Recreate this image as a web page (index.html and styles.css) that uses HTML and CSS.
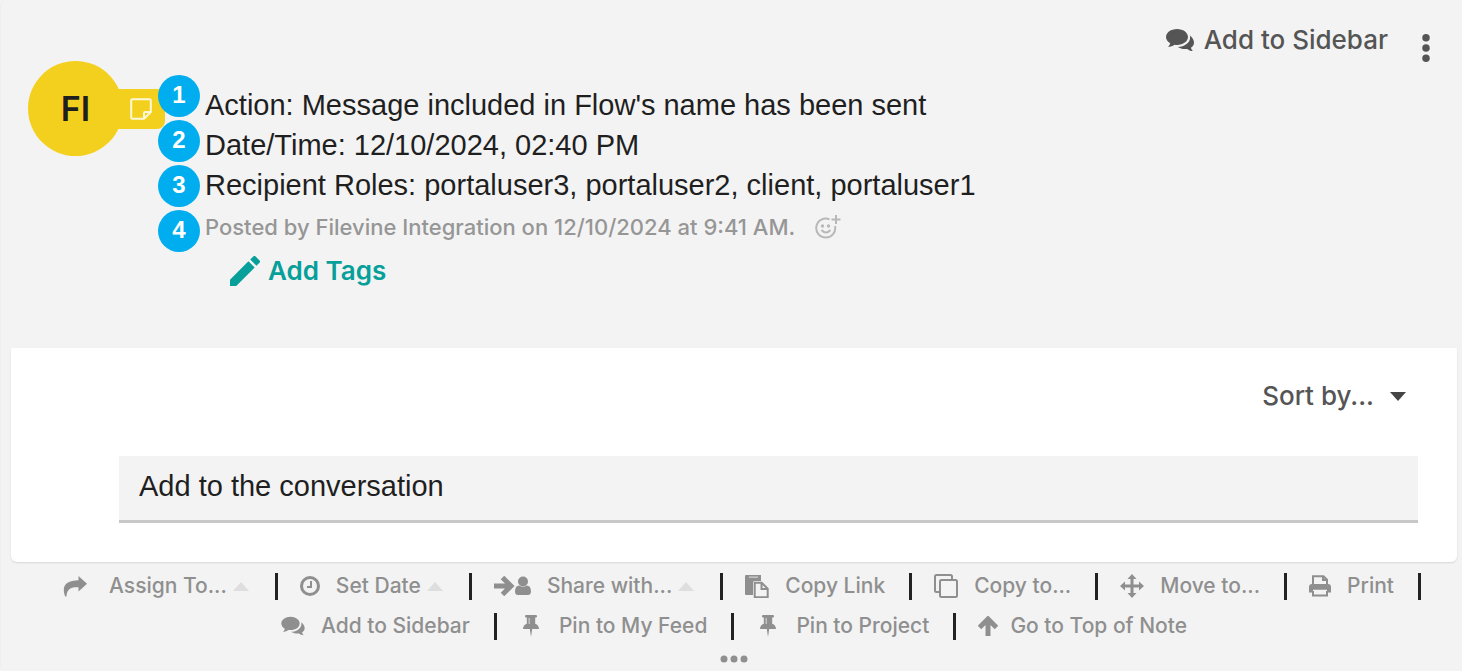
FILE: index.html
```html
<!DOCTYPE html>
<html lang="en">
<head>
    <meta charset="UTF-8">
    <title>Note</title>

    <link rel="stylesheet" href="styles.css">

</head>
<body>

<!-- shapes that are used more than once -->
<svg class="defs" aria-hidden="true">
    <symbol id="comments" viewBox="0 0 28 24">
        <path d="M11 1C5 1 0 4.600 0 9c0 2.500 1.600 4.800 4.200 6.300C3.900 16.800 3 18 2 19c2.600-.2 4.700-1 6.400-2.300.8.100 1.700.2 2.600.2 6.100 0 11-3.500 11-7.900S17.100 1 11 1z"/>
        <path d="M23.800 7.500c.2.700.3 1.300.3 2 0 5.200-5.500 9.300-12.300 9.500 1.900 1.300 4.400 2.100 7.200 2.100.8 0 1.500-.1 2.200-.2 1.400 1.200 3.300 2 5.600 2.100-.9-.9-1.600-1.900-1.900-3.200 2-1.200 3.100-3 3.100-5 0-2.900-1.600-5.700-4.200-7.300z"/>
    </symbol>
    <symbol id="pin" viewBox="0 0 16 22">
        <path d="M3 0h10q1 0 1 1.200T13 2.400h-.8v6.400C14.600 9.600 16 11.500 16 14H9.200L8 22l-1.200-8H0c0-2.500 1.400-4.400 3.800-5.200V2.400H3q-1 0-1-1.200T3 0z"/>
        <path class="shine" d="M5.600 3h1.200v6H5.600z"/>
    </symbol>
</svg>

<div class="note">

    <header class="top">
        <button class="sidebar-button"><svg class="icon-comments" aria-hidden="true"><use href="#comments"/></svg>Add to Sidebar</button>
        <button class="more" aria-label="More options">
            <svg viewBox="0 0 8 30" aria-hidden="true"><circle cx="4" cy="4" r="4"/><circle cx="4" cy="15" r="4"/><circle cx="4" cy="26" r="4"/></svg>
        </button>
    </header>

    <section class="message">
        <div class="author">
            <div class="avatar">FI</div>
            <div class="type">
                <svg viewBox="0 0 22 22" aria-hidden="true"><path d="M2.500 1.200h17q1.300 0 1.300 1.300v11.500l-6.800 6.800H2.500q-1.300 0-1.300-1.300v-17q0-1.300 1.300-1.300zM14 20.500V15.300q0-1.300 1.300-1.300h5.200"/></svg>
            </div>
        </div>

        <div class="text">
            <div class="numbers">
                <span>1</span>
                <span>2</span>
                <span>3</span>
                <span>4</span>
            </div>
            <p class="line">Action: Message included in Flow's name has been sent</p>
            <p class="line">Date/Time: 12/10/2024, 02:40 PM</p>
            <p class="line">Recipient Roles: portaluser3, portaluser2, client, portaluser1</p>
            <div class="posted">
                Posted by Filevine Integration on 12/10/2024 at 9:41 AM.
                <button class="react" aria-label="Add reaction">
                    <svg viewBox="0 0 26 26" aria-hidden="true"><path d="M14.500 5.400A9.500 9.500 0 1 0 20 12M6.500 16q4.500 5 9 0M21 1v9M16.500 5.500h9"/><circle cx="7.500" cy="12" r="1.700"/><circle cx="13.500" cy="12" r="1.700"/></svg>
                </button>
            </div>
            <button class="tags">
                <svg viewBox="3 3 18 18" aria-hidden="true"><path d="M3 17.250V21h3.750L17.810 9.940l-3.750-3.750L3 17.250zM20.710 7.040a1 1 0 0 0 0-1.410l-2.340-2.340a1 1 0 0 0-1.410 0l-1.830 1.830 3.750 3.750 1.830-1.830z"/></svg>
                Add Tags
            </button>
        </div>
    </section>

    <section class="conversation">
        <button class="sort">Sort by...<span class="arrow-down"></span></button>
        <input class="reply" type="text" placeholder="Add to the conversation" aria-label="Add to the conversation">
    </section>

    <footer class="actions">
        <ul>
            <li><button class="wide"><svg width="24" height="21" viewBox="0 0 24 21" aria-hidden="true"><path d="M15.500 0 24 7.700l-8.500 7.700v-4.200C8 10.800 4 12.500 3.400 20.500H2.200C-2 9.500 3.500 4.400 15.500 4.300z"/></svg>Assign To...<span class="arrow-up"></span></button></li>
            <li><button><svg class="medium" width="20" height="20" viewBox="0 0 20 20" aria-hidden="true"><circle cx="10" cy="10" r="8.500"/><path class="thin" d="M11 5v6H7"/></svg>Set Date<span class="arrow-up"></span></button></li>
            <li><button><svg width="37" height="20" viewBox="0 0 37 20" aria-hidden="true"><path class="thick" d="M0 10H16M8.500 1.500l8.500 8.500-8.500 8.500"/><circle cx="29" cy="5.500" r="5"/><path d="M21 15.500c0-4 1.500-6 4.300-6q3.700 2.700 7.400 0c2.800 0 4.300 2 4.300 6 0 2.500-1.300 3.500-3 3.500H24c-1.700 0-3-1-3-3.500z"/></svg>Share with...<span class="arrow-up"></span></button></li>
            <li><button><svg width="24" height="23" viewBox="0 0 24 23" aria-hidden="true"><path d="M1 0h15v6h-6.500q-1.500 0-1.500 1.500V20H1q-1 0-1-1V1q0-1 1-1z"/><path class="shine" d="M4 1.500h9v1.300H4z"/><path class="thin" d="M9.700 7.700h7l6 6v8.500h-13zM16.500 8v6H22.500"/></svg>Copy Link</button></li>
            <li><button><svg width="24" height="24" viewBox="0 0 24 24" aria-hidden="true"><path class="thin" d="M5 18H2.500Q1 18 1 16.500v-14Q1 1 2.500 1h14Q18 1 18 2.500V5M7.500 6h14Q23 6 23 7.500v14Q23 23 21.500 23h-14Q6 23 6 21.500v-14Q6 6 7.500 6z"/></svg>Copy to...</button></li>
            <li><button><svg width="24" height="24" viewBox="0 0 24 24" aria-hidden="true"><path d="M12 0l4.500 5h-3v5.500H19V7.500l5 4.500-5 4.500v-3h-5.500V19h3L12 24l-4.500-5h3v-5.500H5v3L0 12l5-4.500v3h5.500V5h-3z"/></svg>Move to...</button></li>
            <li><button><svg width="22" height="22" viewBox="0 0 22 22" aria-hidden="true"><path class="thin" d="M4 9V1.200h10.500L18 4.700V9M4 16v4.500h14V16M14 1.500v3.500h4"/><path d="M3 9h16q3 0 3 3v5.500h-4v-2.700H4v2.700H0V12q0-3 3-3z"/></svg>Print</button></li>
        </ul>
        <ul>
            <li><button><svg width="24" height="20" viewBox="0 0 24 20" aria-hidden="true"><use href="#comments" width="24" height="20"/></svg>Add to Sidebar</button></li>
            <li><button class="pin"><svg width="16" height="22" aria-hidden="true"><use href="#pin"/></svg>Pin to My Feed</button></li>
            <li><button class="pin"><svg width="16" height="22" aria-hidden="true"><use href="#pin"/></svg>Pin to Project</button></li>
            <li><button class="close"><svg width="20" height="20" viewBox="0 0 20 20" aria-hidden="true"><path class="thick" d="M10 20V3M1.500 11.500l8.500-8.500 8.500 8.500"/></svg>Go to Top of Note</button></li>
        </ul>
        <button class="dots" aria-label="Show more">
            <svg width="28" height="8" viewBox="0 0 28 8" aria-hidden="true"><circle cx="4" cy="4" r="3.500"/><circle cx="14" cy="4" r="3.500"/><circle cx="24" cy="4" r="3.500"/></svg>
        </button>
    </footer>

</div>

</body>
</html>
```
FILE: styles.css
```css
* {
    box-sizing: border-box;
}

body {
    margin: 0;
    background-color: #f3f3f3;
    font-family: "Liberation Sans", Arial, sans-serif;
    color: #1f1f1f;
}

button {
    display: flex;
    align-items: center;
    border: none;
    padding: 0;
    background: none;
    font-family: Inter, Helvetica, sans-serif;
    color: inherit;
    cursor: pointer;
}

svg {
    display: block;
    flex: none;
    fill: currentColor;
}

.defs {
    display: none;
}

.note {
    min-height: 100vh;
    padding: 0 5px 0 10px;
    background-color: #f3f3f3;
    border-left: 1px solid #eee;
    border-radius: 6px;
}

/* top right buttons */
.top {
    display: flex;
    justify-content: flex-end;
    align-items: flex-start;
    gap: 34px;
    height: 64px;
    padding: 24px 27px 0 0;
    color: #555;
}

.sidebar-button {
    gap: 10px;
    font-size: 26px;
    font-weight: 500;
    line-height: 32px;
}

.icon-comments {
    width: 28px;
    height: 24px;
}

.more {
    padding-top: 10px;
}

.more svg {
    width: 8px;
    height: 28px;
}

/* note text */
.message {
    display: flex;
    height: 284px;
    padding-left: 17px;
}

.author {
    display: flex;
    align-items: center;
    height: 89px;
    width: 177px;
}

.avatar {
    width: 95px;
    height: 95px;
    border-radius: 50%;
    background-color: #f4d01e;
    font-family: Inter, Helvetica, sans-serif;
    font-size: 34px;
    font-weight: 600;
    line-height: 95px;
    text-align: center;
}

.type {
    height: 40px;
    width: 52px;
    margin-left: -10px;
    padding: 9px 0 0 17px;
    border-radius: 0 8px 8px 0;
    background-color: #f4d01e;
}

.type svg {
    width: 22px;
    height: 22px;
    fill: none;
    stroke: #fff8d8;
    stroke-width: 2;
}

.text {
    position: relative;
    padding-top: 21px;
}

.line {
    margin: 0;
    font-size: 29px;
    line-height: 40px;
}

/* numbers lie over the yellow label */
.numbers {
    position: absolute;
    top: 11px;
    left: -47px;
    display: flex;
    flex-direction: column;
    gap: 3px;
}

.numbers span {
    width: 42px;
    height: 42px;
    border-radius: 50%;
    background-color: #00aeef;
    color: white;
    font-size: 24px;
    font-weight: bold;
    line-height: 40px;
    text-align: center;
}

.posted {
    display: flex;
    align-items: center;
    gap: 20px;
    height: 43px;
    font-family: Inter, Helvetica, sans-serif;
    font-size: 22px;
    font-weight: 500;
    color: #969696;
}

.react svg {
    width: 26px;
    height: 26px;
    fill: #b8b8b8;
}

.react path {
    fill: none;
    stroke: #b8b8b8;
    stroke-width: 2;
}

.tags {
    gap: 8px;
    margin-left: 25px;
    font-size: 26px;
    font-weight: 600;
    line-height: 46px;
    color: #069f9a;
}

.tags svg {
    width: 30px;
    height: 30px;
}

/* conversation box */
.conversation {
    padding: 32px 39px 39px 108px;
    border-radius: 0 0 6px 6px;
    background-color: white;
    box-shadow: 0 1px 2px rgba(0, 0, 0, 0.12);
}

.sort {
    gap: 16px;
    margin: 0 12px 44px auto;
    font-size: 26px;
    font-weight: 500;
    line-height: 32px;
    color: #555;
}

.arrow-down {
    border: 8px solid transparent;
    border-top: 9px solid #444;
    border-bottom: none;
}

.reply {
    display: block;
    width: 100%;
    height: 67px;
    padding: 0 20px 4px;
    border: none;
    border-bottom: 3px solid #c8c8c8;
    border-radius: 0;
    background-color: #f3f3f3;
    font-family: inherit;
    font-size: 29px;
    color: #1f1f1f;
}

.reply::placeholder {
    color: #1f1f1f;
    opacity: 1;
}

/* action links */
.actions {
    padding: 4px 0 0;
    color: #8f8f8f;
}

.actions ul {
    display: flex;
    justify-content: center;
    list-style: none;
    margin: 0;
    padding: 0;
}

.actions ul:first-child {
    padding-left: 16px;
}

.actions li {
    display: flex;
    align-items: center;
    height: 40px;
    white-space: nowrap;
}

.actions ul:first-child li::after,
.actions li:not(:last-child)::after {
    content: "";
    width: 3px;
    height: 27px;
    margin: 0 22px 0 24px;
    background-color: #222;
}

.actions ul:first-child li:last-child::after {
    margin-right: 0;
}

.actions li button {
    gap: 16px;
    font-size: 21px;
    font-weight: 500;
    line-height: 40px;
}

.actions .wide {
    gap: 22px;
}

.actions .pin {
    gap: 20px;
    padding-left: 4px;
}

.actions .close {
    gap: 12px;
}

.arrow-up {
    margin: 0 2px 0 -10px;
    border: 8px solid transparent;
    border-top: none;
    border-bottom: 9px solid #dedede;
}

.wide .arrow-up {
    margin-left: -16px;
}

.actions .thin,
.actions .medium,
.actions .thick {
    fill: none;
    stroke: currentColor;
    stroke-width: 2;
}

.actions .medium {
    stroke-width: 3;
}

.actions .thick {
    stroke-width: 5;
}

.shine {
    fill: #d0d0d0;
}

.actions .dots {
    margin: 9px auto 0;
}
```
